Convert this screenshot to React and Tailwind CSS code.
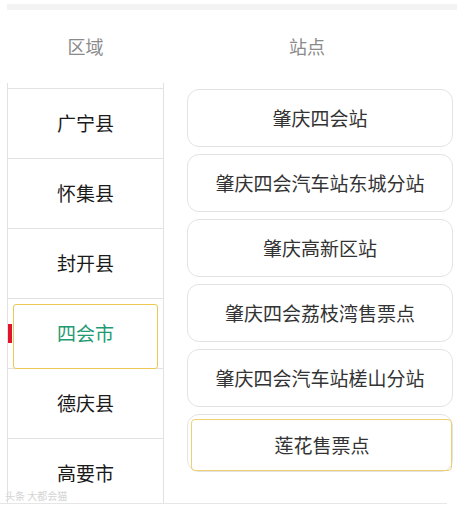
import React from "react";

const areas = ["广宁县", "怀集县", "封开县", "四会市", "德庆县", "高要市"];
const stations = [
  "肇庆四会站",
  "肇庆四会汽车站东城分站",
  "肇庆高新区站",
  "肇庆四会荔枝湾售票点",
  "肇庆四会汽车站槎山分站",
  "莲花售票点",
];

const font = { fontFamily: '"Noto Sans CJK SC", "Noto Sans", sans-serif' };

const AreaRow = ({ name, active }) => (
  <div className="relative h-[70px] flex items-center justify-center border-b border-[#e2e2e2] shrink-0">
    {active && (
      <>
        <div className="absolute left-[5px] right-[5px] top-[5px] bottom-[-1px] border border-[#ecc955] rounded-[3px]" />
        <div className="absolute left-0 top-[25px] w-[4px] h-[19px] bg-[#e0142c]" />
      </>
    )}
    <span className={`text-[19px] ${active ? "text-[#1f9a72]" : "text-[#1a1a1a]"}`}>{name}</span>
  </div>
);

const StationCard = ({ name, active }) => (
  <div className="relative h-[58px] shrink-0 border border-[#e3e3e3] rounded-[12px] flex items-center justify-center">
    {active && (
      <div className="absolute left-[3px] right-0 top-[4px] bottom-0 border border-[#efd070] rounded-[4px]" />
    )}
    <span className={`text-[19px] text-[#333] ${active ? "ml-[4px] mt-[4px]" : ""}`}>{name}</span>
  </div>
);

export default function App() {
  return (
    <div className="relative w-[460px] h-[510px] bg-white overflow-hidden" style={font}>
      <div className="mt-[4px] ml-[7px] mr-[3px] h-[6px] bg-[#f3f3f3]" />

      <div className="flex h-[73px] items-center">
        <div className="ml-[7px] w-[157px] text-center text-[18px] text-[#8a8a8a]">区域</div>
        <div className="w-[286px] text-center text-[18px] text-[#8a8a8a]">站点</div>
      </div>

      <div className="flex h-[420px]">
        <div className="ml-[7px] w-[157px] border-x border-[#e2e2e2] flex flex-col overflow-hidden">
          <div className="h-[6px] border-b border-[#e2e2e2] shrink-0" />
          {areas.map((a) => (
            <AreaRow key={a} name={a} active={a === "四会市"} />
          ))}
        </div>

        <div className="ml-[23px] w-[266px] pt-[6px] flex flex-col gap-[7px]">
          {stations.map((s) => (
            <StationCard key={s} name={s} active={s === "莲花售票点"} />
          ))}
        </div>
      </div>

      <div className="w-[447px] h-px bg-[#e6e6e6]" />

      <div className="absolute left-[5px] top-[491px] text-[10px] leading-none text-[#d4d4d4]">
        头条 大都会猫
      </div>
    </div>
  );
}
